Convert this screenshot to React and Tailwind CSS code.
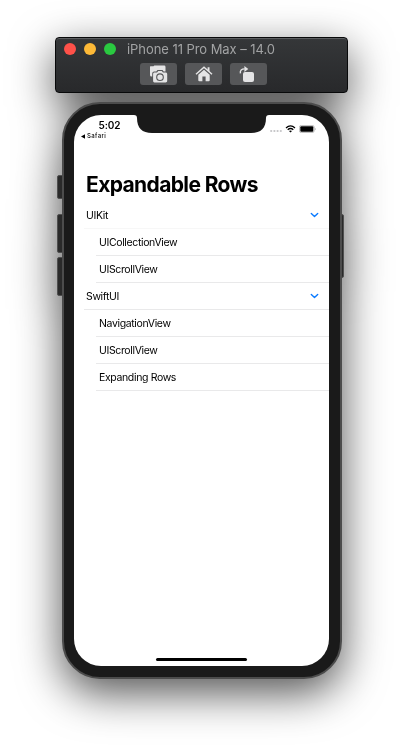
const rows = [
  { label: "UIKit", parent: true, faint: true },
  { label: "UICollectionView" },
  { label: "UIScrollView" },
  { label: "SwiftUI", parent: true },
  { label: "NavigationView" },
  { label: "UIScrollView" },
  { label: "Expanding Rows" },
];

function ToolButton({ children }) {
  return (
    <button className="flex h-[22px] w-[37px] items-center justify-center rounded-[3px] bg-[#565759]">
      {children}
    </button>
  );
}

function CameraIcon() {
  return (
    <svg width="19" height="18" viewBox="0 0 19 18">
      <path d="M1.500 1.200H4.500L5.300 .6H15.200Q16.500 .6 16.500 1.900V6.500H14.700L13.500 5H8.500L7.300 6.500H5.200Q3.200 6.500 3.200 8.500V11.400H2.500Q1 11.400 1 9.900V1.700Q1 1.200 1.500 1.200Z" fill="#e4e4e5" />
      <path d="M5.400 7.500H8L9.300 6H12.700L14 7.500H16.600C17.500 7.500 18.200 8.200 18.200 9V15.800C18.200 16.700 17.500 17.400 16.600 17.400H5.400C4.700 17.400 4.100 16.700 4.100 15.800V9C4.100 8.200 4.700 7.500 5.400 7.500Z" fill="#e4e4e5" />
      <circle cx="11" cy="12.200" r="3.300" fill="#e4e4e5" stroke="#565759" strokeWidth="1.100" />
    </svg>
  );
}

function HomeIcon() {
  return (
    <svg width="18" height="16" viewBox="0 0 18 16">
      <path d="M1 8.300L9 1.200L17 8.300" fill="none" stroke="#e4e4e5" strokeWidth="1.500" />
      <path d="M12.600 1.200H14.500V6L12.600 4.300Z" fill="#e4e4e5" />
      <path d="M3.300 8.700L9 3.700L14.700 8.700V14.200Q14.700 15.200 13.700 15.200H10.600V10.600H7.400V15.200H4.300Q3.300 15.200 3.300 14.200Z" fill="#e4e4e5" />
    </svg>
  );
}

function RotateIcon() {
  return (
    <svg width="18" height="18" viewBox="0 0 18 18" className="mr-[2px]">
      <path d="M1.400 8.300C.8 5.200 2.700 3.900 5.700 3.900" fill="none" stroke="#e4e4e5" strokeWidth="1.400" />
      <path d="M5.400 1L9.300 4L5.400 7Z" fill="#e4e4e5" />
      <rect x="4" y="7" width="11" height="10" rx="2" fill="#e4e4e5" />
    </svg>
  );
}

function Toolbar() {
  return (
    <header className="ml-[55px] h-14 w-[293px] rounded-[4px] border border-[#08090a] bg-linear-to-b from-[#353739] to-[#28292b] shadow-[inset_0_1px_0_#5b5d5f]">
      <div className="flex h-[22px] items-center pl-2">
        <div className="flex gap-2">
          <span className="size-3 rounded-full bg-[#ff5149]" />
          <span className="size-3 rounded-full bg-[#fdb937]" />
          <span className="size-3 rounded-full bg-[#2ac940]" />
        </div>
        <h2 className="ml-[11px] whitespace-nowrap text-[13px] leading-4 tracking-[-0.06px] text-[#a2a3a4]">
          iPhone 11 Pro Max – 14.0
        </h2>
      </div>
      <div className="mt-[3px] flex gap-2 pl-[84px]">
        <ToolButton><CameraIcon /></ToolButton>
        <ToolButton><HomeIcon /></ToolButton>
        <ToolButton><RotateIcon /></ToolButton>
      </div>
    </header>
  );
}

function StatusBar() {
  return (
    <div className="flex h-[27px] justify-between">
      <div className="pl-[7px] pt-1">
        <div className="pl-[17.5px] text-[10px] font-semibold leading-3 tracking-[-0.1px]">5:02</div>
        <div className="flex items-center gap-[2px] text-[6px] font-medium leading-[10px] tracking-[0.4px]">
          <svg width="4" height="5" viewBox="0 0 4 5">
            <path d="M4 .2V4.800L0 2.500Z" />
          </svg>
          Safari
        </div>
      </div>
      <div className="flex h-[27px] items-center pr-[13px]">
        <svg width="12" height="4" viewBox="0 0 12 4" className="mt-[5px]" fill="#c4c4c6">
          <circle cx="1.200" cy="2" r="1.100" />
          <circle cx="4.400" cy="2" r="1.100" />
          <circle cx="7.600" cy="2" r="1.100" />
          <circle cx="10.800" cy="2" r="1.100" />
        </svg>
        <svg width="11" height="8" viewBox="0 0 10 8" className="ml-[3px]" fill="none" stroke="#000" strokeWidth="1.300">
          <path d="M.5 2.900Q5-1.200 9.500 2.900" />
          <path d="M2.200 4.800Q5 2.300 7.800 4.800" />
          <path d="M3.500 6Q5 4.800 6.500 6L5 7.600Z" fill="#000" stroke="none" />
        </svg>
        <svg width="17" height="8" viewBox="0 0 17 8" className="ml-[3px]">
          <rect x=".4" y=".4" width="14.800" height="7.200" rx="2" fill="none" stroke="#aaa" strokeWidth=".8" />
          <rect x="1.300" y="1.300" width="13" height="5.400" rx="1" />
          <path d="M16 2.700Q17.200 4 16 5.300Z" fill="#999" />
        </svg>
      </div>
    </div>
  );
}

function Row({ row }) {
  return (
    <li className={row.parent ? "pl-[10px]" : "pl-[22px]"}>
      <div
        className={
          "flex h-[27px] items-center justify-between border-b pr-[10px] text-[10.5px] leading-[14px] tracking-[-0.36px] " +
          (row.faint ? "border-[#f7f7f7] " : "border-[#e9e9ea] ") +
          (row.parent ? "pl-[2px]" : "pl-[3px]")
        }
      >
        <span className="pt-[2px]">{row.label}</span>
        {row.parent && (
          <svg width="9" height="6" viewBox="0 0 9 6" fill="none" stroke="#0a7aff" strokeWidth="1.400" strokeLinecap="round" strokeLinejoin="round">
            <path d="M1.300 1.400L4.500 4.400L7.700 1.400" />
          </svg>
        )}
      </div>
    </li>
  );
}

function Phone() {
  return (
    <main className="relative ml-[62px] mt-[9px] h-[577px] w-[279.5px]">
      <span className="absolute -left-[5px] top-[73px] h-6 w-2 rounded-l-[2px] border border-[#505050] bg-[#2a2a2a]" />
      <span className="absolute -left-[5px] top-28 h-[39px] w-2 rounded-l-[2px] border border-[#505050] bg-[#2a2a2a]" />
      <span className="absolute -left-[5px] top-[155px] h-[39px] w-2 rounded-l-[2px] border border-[#505050] bg-[#2a2a2a]" />
      <span className="absolute -right-[2.5px] top-28 h-16 w-2 rounded-r-[2px] border border-[#505050] bg-[#2a2a2a]" />
      <div className="relative h-full rounded-[38px] border-2 border-[#4c4c4c] bg-[#1a1a1a] px-[10px] pb-[11px] pt-[11px]">
        <div className="relative flex h-[551px] w-[255px] flex-col overflow-hidden rounded-[27px] bg-white text-black">
          <StatusBar />
          <svg width="136" height="18" viewBox="0 0 136 18" className="absolute left-[60px] top-0">
            <path d="M0 0Q3 0 3 3C3 13 8 18 18 18H117C127 18 132 13 132 3Q132 0 135 0Z" fill="#1a1a1a" />
          </svg>
          <h1 className="ml-3 mt-[30px] whitespace-nowrap text-[21px] font-bold leading-[26px] tracking-[-0.62px]">
            Expandable Rows
          </h1>
          <ul className="mt-1">
            {rows.map((row, index) => (
              <Row key={index} row={row} />
            ))}
          </ul>
          <div className="mb-[5px] ml-[82px] mt-auto h-[3px] w-[91px] rounded-full bg-black" />
        </div>
      </div>
    </main>
  );
}

export default function App() {
  return (
    <div className="h-[753px] w-[403px] overflow-hidden bg-white font-['Inter',sans-serif]">
      <div className="flex h-[753px] flex-col pt-[37px] [filter:drop-shadow(0_14px_22px_rgba(0,0,0,0.68))]">
        <Toolbar />
        <Phone />
      </div>
    </div>
  );
}
